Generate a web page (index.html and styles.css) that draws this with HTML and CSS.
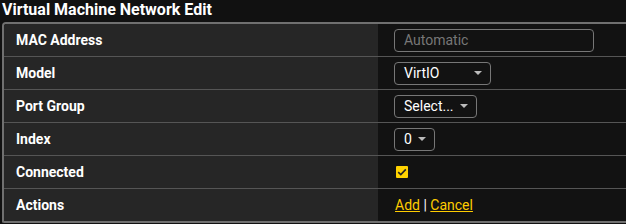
FILE: index.html
```html
<!DOCTYPE html>
<html>
<head>
<meta charset="utf-8">
<link rel="stylesheet" href="styles.css">
</head>
<body>
<div class="title">Virtual Machine Network Edit</div>
<div class="table">
  <div class="row">
    <div class="label">MAC Address</div>
    <div class="value"><input class="text" type="text" placeholder="Automatic"></div>
  </div>
  <div class="row">
    <div class="label">Model</div>
    <div class="value"><span class="select w-model">VirtIO<span class="caret"></span></span></div>
  </div>
  <div class="row">
    <div class="label">Port Group</div>
    <div class="value"><span class="select">Select...<span class="caret"></span></span></div>
  </div>
  <div class="row">
    <div class="label">Index</div>
    <div class="value"><span class="select">0<span class="caret"></span></span></div>
  </div>
  <div class="row">
    <div class="label">Connected</div>
    <div class="value"><span class="check"><svg width="10" height="8" viewBox="0 0 10 8"><path d="M1.2 4.2 L3.8 6.6 L8.8 1.4" fill="none" stroke="#222" stroke-width="1.6"/></svg></span></div>
  </div>
  <div class="row last">
    <div class="label">Actions</div>
    <div class="value"><span class="actions"><a class="link" href="#">Add</a> | <a class="link" href="#">Cancel</a></span></div>
  </div>
</div>
</body>
</html>
```
FILE: styles.css
```css
html, body {
  margin: 0;
  padding: 0;
  background: #111111;
  overflow: hidden;
}
body {
  font-family: Roboto, "Liberation Sans", sans-serif;
  color: #ffffff;
}
.title {
  font-size: 16px;
  font-weight: 700;
  height: 22px;
  line-height: 20px;
  padding-left: 2px;
}
.table {
  margin-left: 2px;
  width: 640px;
  border-top: 2px solid #707070;
  border-left: 2px solid #707070;
  border-bottom: 2px solid #707070;
  border-top-left-radius: 4px;
  border-bottom-left-radius: 2px;
  overflow: hidden;
}
.row {
  display: flex;
  height: 32px;
  border-bottom: 1px solid #555555;
}
.row.last {
  border-bottom: none;
}
.label {
  width: 362px;
  flex: none;
  background: #262626;
  padding-left: 12px;
  font-size: 14px;
  font-weight: 700;
  line-height: 32px;
}
.value {
  flex: 1;
  background: #121212;
  padding-left: 16px;
  display: flex;
  align-items: center;
  font-size: 14px;
}
.text {
  box-sizing: border-box;
  width: 200px;
  height: 23px;
  border: 1px solid #777777;
  border-radius: 4px;
  background: #121212;
  color: #ffffff;
  font-family: Roboto, "Liberation Sans", sans-serif;
  font-size: 14px;
  padding: 0 9px;
  outline: none;
}
.text::placeholder {
  color: #777777;
}
.select {
  box-sizing: border-box;
  height: 23px;
  border: 1px solid #777777;
  border-radius: 4px;
  display: inline-flex;
  align-items: center;
  padding: 0 8px 0 9px;
  font-size: 14px;
  color: #ffffff;
}
.w-model {
  width: 97px;
  justify-content: space-between;
}
.caret {
  display: inline-block;
  width: 0;
  height: 0;
  margin-left: 6px;
  border-left: 4px solid transparent;
  border-right: 4px solid transparent;
  border-top: 4px solid #bbbbbb;
}
.check {
  width: 12px;
  height: 12px;
  background: #ffd200;
  border-radius: 1px;
  margin-left: 2px;
  display: inline-flex;
  align-items: center;
  justify-content: center;
}
.actions {
  font-size: 14px;
  color: #ffffff;
  padding-left: 1px;
}
.link {
  color: #ffcc00;
  text-decoration: underline;
}
```
